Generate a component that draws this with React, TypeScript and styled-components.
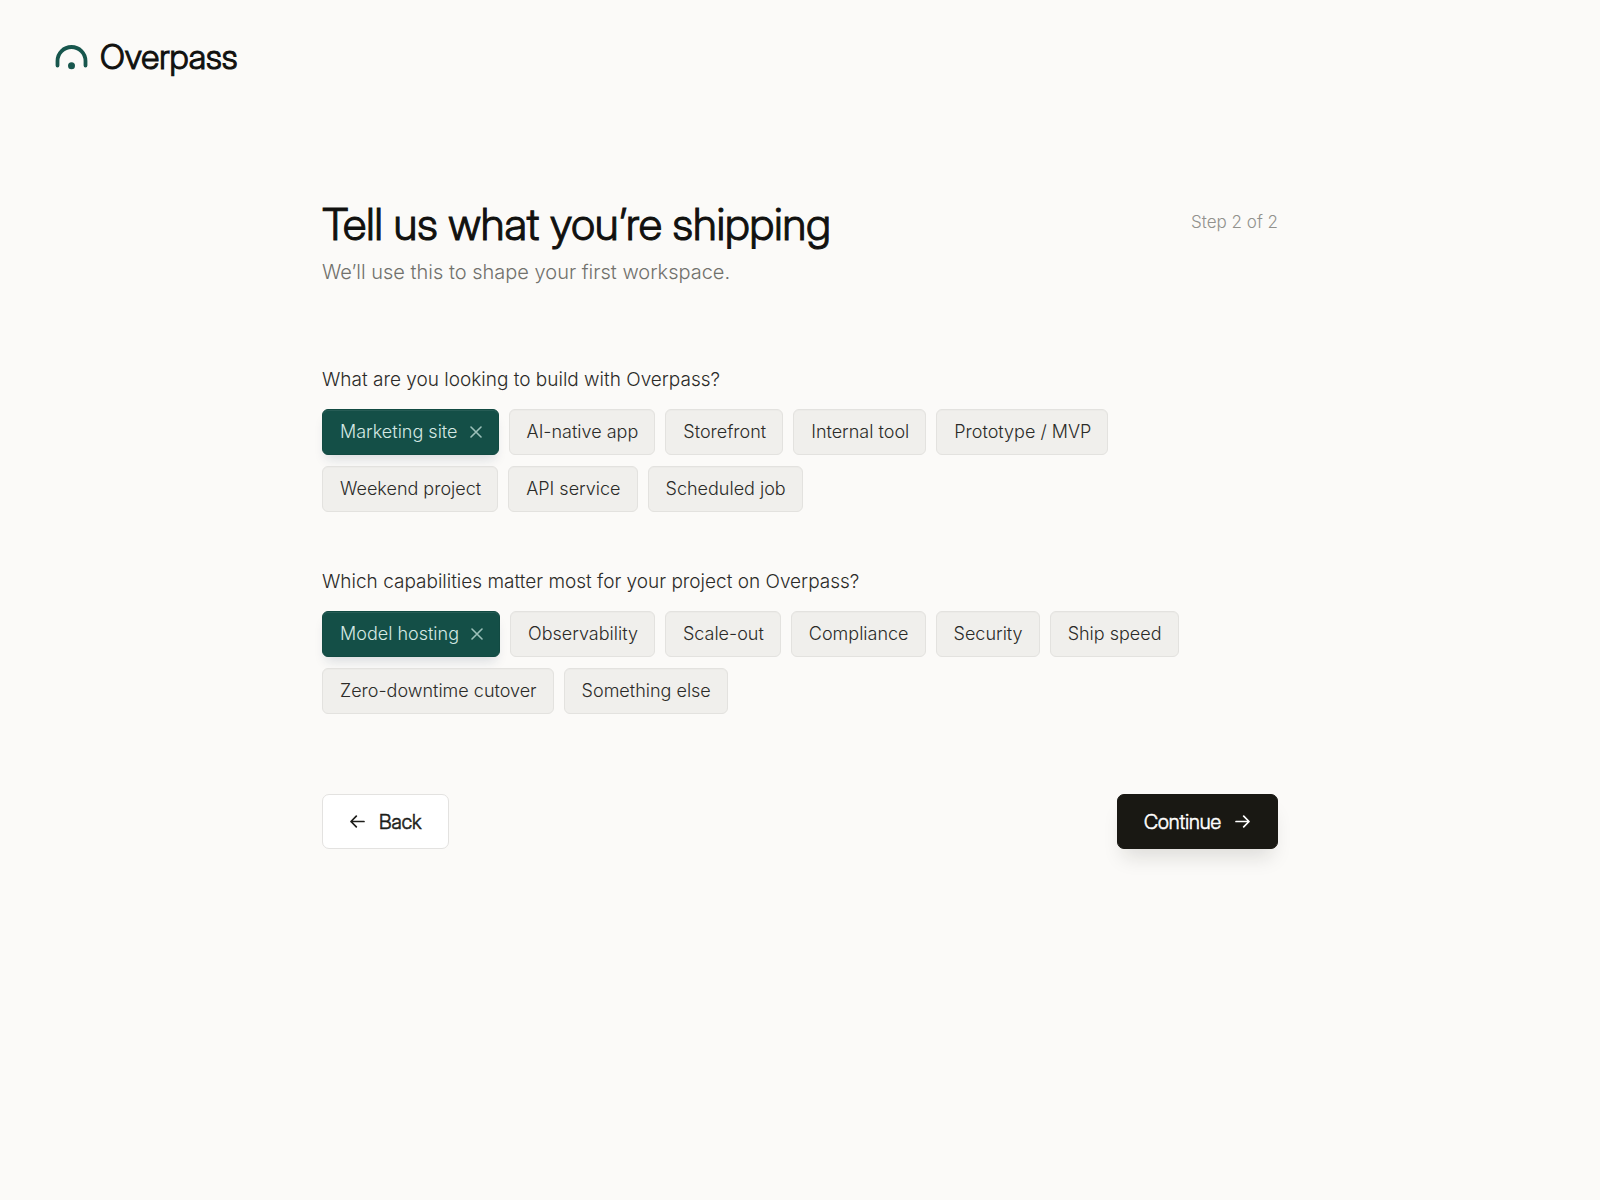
import React, { useState } from "react";
import styled, { createGlobalStyle, css } from "styled-components";

const GlobalStyle = createGlobalStyle`
  *, *::before, *::after {
    box-sizing: border-box;
  }
  body {
    margin: 0;
    background: #fbfaf8;
    color: #11110f;
    font-family: Inter, "Liberation Sans", sans-serif;
    font-size: 18px;
    font-weight: 300;
  }
`;

const displayType = css`
  font-family: "Inter Display", Inter, "Liberation Sans", sans-serif;
  font-weight: 300;
  -webkit-text-stroke: 1px currentColor;
`;

const Page = styled.div`
  min-height: 100vh;
`;

const Header = styled.header`
  padding: 37px 55px 35px;
`;

const Brand = styled.a`
  ${displayType}
  display: inline-flex;
  align-items: center;
  gap: 12px;
  color: #11110f;
  font-size: 34px;
  line-height: 40px;
  text-decoration: none;
`;

const Main = styled.main`
  width: 100%;
  max-width: 1004px;
  margin: 0 auto;
  padding: 84px 24px 48px;
`;

const Intro = styled.div`
  display: flex;
  justify-content: space-between;
  align-items: flex-start;
  gap: 24px;
`;

const Title = styled.h1`
  ${displayType}
  margin: 0;
  font-size: 44px;
  line-height: 56px;
`;

const Subtitle = styled.p`
  margin: 6px 0 0;
  color: #71716c;
  font-size: 20px;
  line-height: 28px;
`;

const Step = styled.span`
  padding-top: 14px;
  color: #91918c;
  font-size: 17px;
  line-height: 24px;
  white-space: nowrap;
`;

const Form = styled.form`
  display: flex;
  flex-direction: column;
  margin-top: 80px;
`;

const Question = styled.fieldset`
  min-width: 0;
  margin: 0 0 56px;
  padding: 0;
  border: 0;
`;

const Legend = styled.legend`
  padding: 0;
  margin-bottom: 15px;
  color: #2b2b28;
  font-size: 19px;
  line-height: 28px;
`;

const Chips = styled.div`
  display: flex;
  flex-wrap: wrap;
  gap: 11px 10px;
`;

const Chip = styled.button<{ $selected: boolean }>`
  display: inline-flex;
  align-items: center;
  gap: 12px;
  height: 46px;
  padding: 0 16px 0 17px;
  border: 1px solid ${(p) => (p.$selected ? "#124a42" : "#e3e2df")};
  border-radius: 6px;
  background: ${(p) => (p.$selected ? "#144f47" : "#f0efec")};
  color: ${(p) => (p.$selected ? "#d5e9e4" : "#2b2b28")};
  box-shadow: ${(p) =>
    p.$selected
      ? "inset 0 1px 0 rgba(255, 255, 255, 0.08), 0 8px 12px -4px rgba(20, 50, 80, 0.15)"
      : "inset 0 1px 1px rgba(0, 0, 0, 0.02)"};
  font: inherit;
  line-height: 24px;
  white-space: nowrap;
  cursor: pointer;
`;

const Actions = styled.div`
  display: flex;
  justify-content: space-between;
  margin-top: 24px;
`;

const Action = styled.button<{ $primary?: boolean }>`
  display: inline-flex;
  align-items: center;
  gap: 14px;
  height: 55px;
  padding: 0 26px;
  border: 1px solid ${(p) => (p.$primary ? "#191813" : "#e3e2e0")};
  border-radius: 7px;
  background: ${(p) => (p.$primary ? "#191813" : "#ffffff")};
  color: ${(p) => (p.$primary ? "#ffffff" : "#1d1d1a")};
  box-shadow: ${(p) => (p.$primary ? "0 14px 20px -6px rgba(25, 24, 19, 0.13)" : "none")};
  font: inherit;
  font-size: 20px;
  line-height: 24px;
  cursor: pointer;
`;

const ActionLabel = styled.span`
  ${displayType}
  -webkit-text-stroke-width: 0.5px;
`;

const Logo = () => (
  <svg width="33" height="26" viewBox="0 0 33 26" fill="none" aria-hidden="true">
    <path d="M2.500 21.500v-4.500a14 14 0 0 1 28 0v4.500" stroke="#17564d" strokeWidth="3.8" strokeLinecap="round" />
    <circle cx="16.500" cy="21.800" r="3.500" fill="#17564d" />
  </svg>
);

const CloseIcon = () => (
  <svg width="12" height="12" viewBox="0 0 12 12" fill="none" stroke="#9cc0b9" strokeWidth="1.6" strokeLinecap="round" aria-hidden="true">
    <path d="M1 1l10 10M11 1L1 11" />
  </svg>
);

const ArrowIcon = ({ back = false }: { back?: boolean }) => (
  <svg width="16" height="14" viewBox="0 0 16 14" fill="none" stroke="currentColor" strokeWidth="1.7" strokeLinecap="round" strokeLinejoin="round" aria-hidden="true">
    <path d={back ? "M15 6.500H2M7.300 1.200L2 6.500L7.300 11.800" : "M1 6.500h13M8.700 1.200L14 6.500L8.700 11.800"} />
  </svg>
);

interface ChipQuestionProps {
  title: string;
  options: string[];
  initial: string;
}

function ChipQuestion({ title, options, initial }: ChipQuestionProps) {
  const [picked, setPicked] = useState<string[]>([initial]);
  const toggle = (name: string) =>
    setPicked((now) => (now.includes(name) ? now.filter((n) => n !== name) : [...now, name]));

  return (
    <Question>
      <Legend>{title}</Legend>
      <Chips>
        {options.map((name) => {
          const selected = picked.includes(name);
          return (
            <Chip key={name} type="button" $selected={selected} aria-pressed={selected} onClick={() => toggle(name)}>
              {name}
              {selected && <CloseIcon />}
            </Chip>
          );
        })}
      </Chips>
    </Question>
  );
}

const BUILD = [
  "Marketing site", "AI-native app", "Storefront", "Internal tool",
  "Prototype / MVP", "Weekend project", "API service", "Scheduled job",
];

const CAPABILITIES = [
  "Model hosting", "Observability", "Scale-out", "Compliance",
  "Security", "Ship speed", "Zero-downtime cutover", "Something else",
];

export default function App() {
  return (
    <Page>
      <GlobalStyle />
      <Header>
        <Brand href="#">
          <Logo />
          Overpass
        </Brand>
      </Header>
      <Main>
        <Intro>
          <div>
            <Title>Tell us what you’re shipping</Title>
            <Subtitle>We’ll use this to shape your first workspace.</Subtitle>
          </div>
          <Step>Step 2 of 2</Step>
        </Intro>
        <Form onSubmit={(e) => e.preventDefault()}>
          <ChipQuestion title="What are you looking to build with Overpass?" options={BUILD} initial="Marketing site" />
          <ChipQuestion
            title="Which capabilities matter most for your project on Overpass?"
            options={CAPABILITIES}
            initial="Model hosting"
          />
          <Actions>
            <Action type="button">
              <ArrowIcon back />
              <ActionLabel>Back</ActionLabel>
            </Action>
            <Action type="submit" $primary>
              <ActionLabel>Continue</ActionLabel>
              <ArrowIcon />
            </Action>
          </Actions>
        </Form>
      </Main>
    </Page>
  );
}
